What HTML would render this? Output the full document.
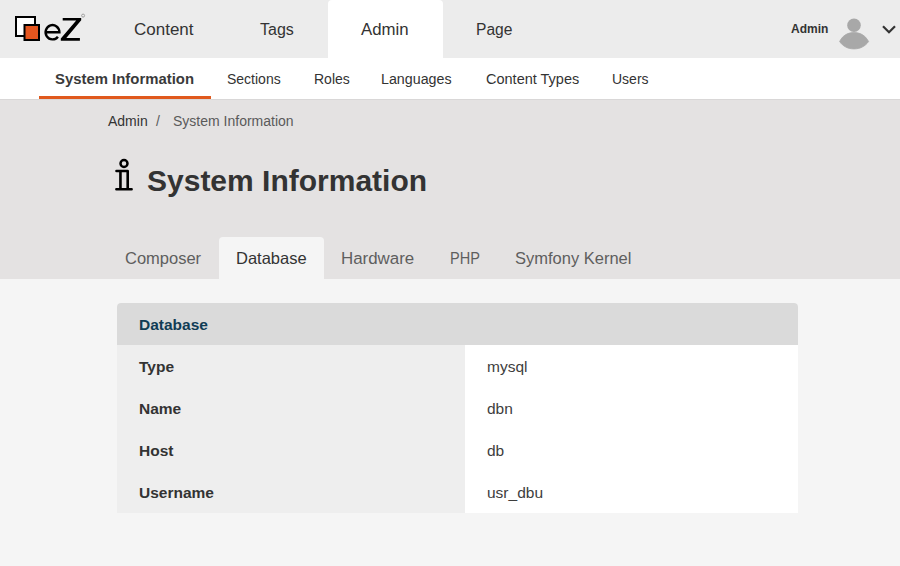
<!DOCTYPE html>
<html>
<head>
<meta charset="utf-8">
<style>
*{margin:0;padding:0;box-sizing:border-box}
html,body{width:900px;height:566px;overflow:hidden}
body{position:relative;background:#f5f5f5;font-family:"Liberation Sans",sans-serif;color:#333}
.a{position:absolute;white-space:nowrap}
#hdr{position:absolute;left:0;top:0;width:900px;height:58px;background:#ececec}
#admtab{position:absolute;left:328px;top:0;width:115px;height:58px;background:#fff;border-radius:4px 4px 0 0}
.nav{font-size:16.5px;color:#333;line-height:20px}
#sub{position:absolute;left:0;top:58px;width:900px;height:41px;background:#fff}
.sn{font-size:14px;color:#333;line-height:18px}
#uline{position:absolute;left:39px;top:96px;width:172px;height:3px;background:#e0591d}
#band{position:absolute;left:0;top:99px;width:900px;height:180px;background:#e4e2e2}
#bline{position:absolute;left:0;top:99px;width:900px;height:1px;background:#d9d7d7}
.bc{font-size:14px;color:#333;line-height:18px}
#title{font-size:30px;font-weight:bold;color:#333;line-height:34px}
#dbtab{position:absolute;left:219px;top:237px;width:105px;height:42px;background:#f5f5f5;border-radius:4px 4px 0 0}
.tb{font-size:16.5px;color:#5e5e5e;line-height:20px}
#tbl{position:absolute;left:117px;top:303px;width:681px;height:210px;background:#fff;border-radius:4px 4px 0 0;overflow:hidden}
#th{position:absolute;left:0;top:0;width:681px;height:42px;background:#dadada}
#lc{position:absolute;left:0;top:42px;width:348px;height:168px;background:#eee}
.k{font-size:15.5px;font-weight:bold;color:#333;line-height:20px}
.v{font-size:15.5px;color:#3d3d3d;line-height:20px}
</style>
</head>
<body>
<div id="hdr"></div>
<div id="admtab"></div>
<!-- logo -->
<svg class="a" style="left:0;top:0" width="100" height="58" viewBox="0 0 100 58">
  <rect x="16" y="17" width="19" height="19" fill="#fff" stroke="#000" stroke-width="2"/>
  <rect x="24.5" y="25" width="14.5" height="15" fill="#e5561f" stroke="#000" stroke-width="2"/>
  <path d="M45.6 32.2H59.4A6.9 7.15 0 1 0 57.9 36.7" fill="none" stroke="#000" stroke-width="2.4"/>
  <path d="M62.7 18H81.2V20.2L66.3 37.9H79.9V40.8H60.8V38.6L76.2 20.6H62.7Z" fill="#000"/>
  <circle cx="83.1" cy="15.6" r="1.5" fill="none" stroke="#999" stroke-width="0.9"/>
</svg>

<div class="a nav" style="left:134px;top:19.5px;font-size:17px">Content</div>
<div class="a nav" style="left:260px;top:19.5px;font-size:16px">Tags</div>
<div class="a nav" style="left:361px;top:19.5px;font-size:16.8px">Admin</div>
<div class="a nav" style="left:476px;top:19.5px;font-size:15.6px">Page</div>
<div class="a" style="left:791px;top:21px;font-size:12px;font-weight:bold;line-height:16px;color:#333">Admin</div>

<!-- avatar -->
<svg class="a" style="left:830px;top:10px" width="70" height="45" viewBox="830 10 70 45">
  <circle cx="854" cy="25.3" r="6.8" fill="#a8a8a8"/>
  <path d="M839.6 41.5C843 35 848 32.6 854 32.6C860 32.6 865 35 868.6 41.5C865 46.5 860 48.9 854 48.9C848 48.9 843 46.5 839.6 41.5Z" fill="#a8a8a8" stroke="#a8a8a8" stroke-width="0.8" stroke-linejoin="round"/>
  <path d="M883 26.2L889 32.2L895 26.2" fill="none" stroke="#333" stroke-width="2.2"/>
</svg>
<div id="sub"></div>
<div class="a sn" style="left:55px;top:70px;font-weight:bold;font-size:14.9px;color:#3a3a3a">System Information</div>
<div class="a sn" style="left:227px;top:70px">Sections</div>
<div class="a sn" style="left:314px;top:70px">Roles</div>
<div class="a sn" style="left:381px;top:70px;font-size:14.25px">Languages</div>
<div class="a sn" style="left:486px;top:70px;font-size:14.5px">Content Types</div>
<div class="a sn" style="left:612px;top:70px">Users</div>
<div id="uline"></div>

<div id="band"></div>
<div id="bline"></div>
<div class="a bc" style="left:108px;top:112px">Admin</div>
<div class="a bc" style="left:156px;top:112px;color:#5a5a5a">/</div>
<div class="a bc" style="left:173px;top:112px;color:#5a5a5a">System Information</div>
<div class="a" id="title" style="left:147px;top:164px">System Information</div>

<!-- info icon -->
<svg class="a" style="left:100px;top:150px" width="50" height="50" viewBox="100 150 50 50">
  <circle cx="124" cy="163.5" r="3.5" fill="none" stroke="#000" stroke-width="2.5"/>
  <path d="M116.5 171H127.7M120.45 171V188.5M127.7 171V188.5M116.4 189.3H131.6" fill="none" stroke="#000" stroke-width="2.6" stroke-linecap="round"/>
</svg>
<div id="dbtab"></div>
<div class="a tb" style="left:125px;top:248px">Composer</div>
<div class="a tb" style="left:236px;top:248px;color:#333">Database</div>
<div class="a tb" style="left:341px;top:249px;font-size:16.9px">Hardware</div>
<div class="a tb" style="left:450px;top:248px;transform:scaleX(0.88);transform-origin:0 0">PHP</div>
<div class="a tb" style="left:515px;top:248px">Symfony Kernel</div>

<div id="tbl">
  <div id="th"></div>
  <div id="lc"></div>
</div>
<div class="a k" style="left:139px;top:315px;color:#103c55">Database</div>
<div class="a k" style="left:139px;top:357px">Type</div>
<div class="a k" style="left:139px;top:399px">Name</div>
<div class="a k" style="left:139px;top:441px">Host</div>
<div class="a k" style="left:139px;top:483px">Username</div>
<div class="a v" style="left:487px;top:357px">mysql</div>
<div class="a v" style="left:487px;top:399px">dbn</div>
<div class="a v" style="left:487px;top:441px">db</div>
<div class="a v" style="left:487px;top:483px">usr_dbu</div>
</body>
</html>
